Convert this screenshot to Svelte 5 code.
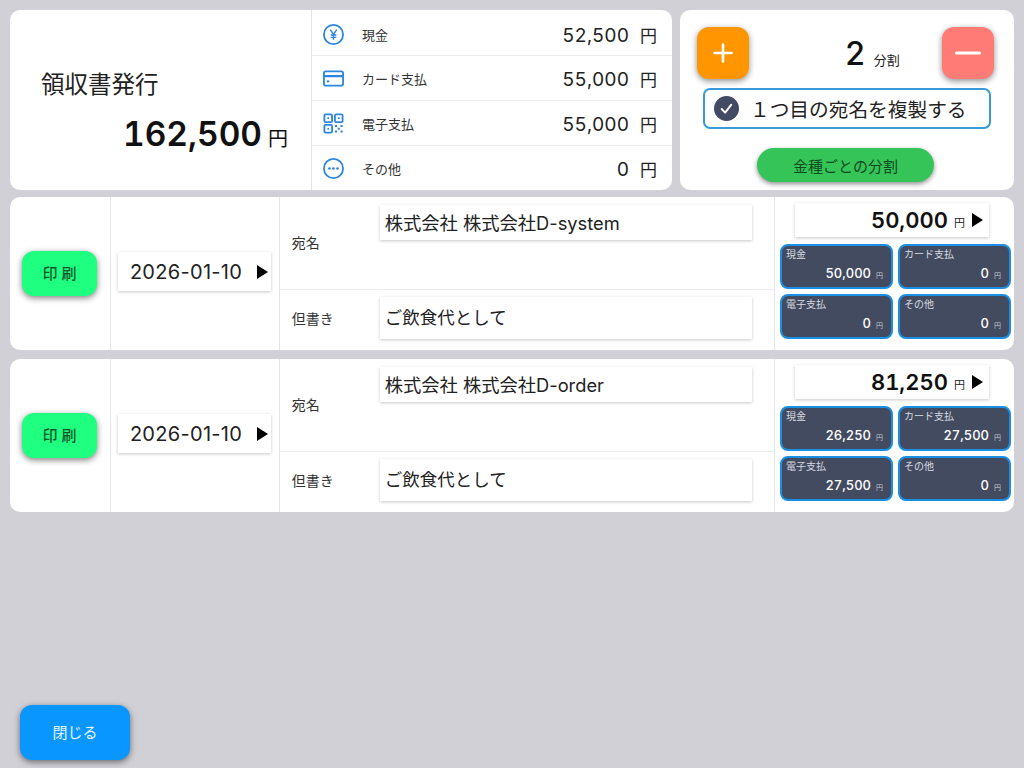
<script>
	const methods = [
		{ key: 'cash', label: '現金', amount: '52,500' },
		{ key: 'card', label: 'カード支払', amount: '55,000' },
		{ key: 'qr', label: '電子支払', amount: '55,000' },
		{ key: 'other', label: 'その他', amount: '0' }
	];

	const receipts = [
		{
			name: '株式会社 株式会社D-system',
			total: '50,000',
			parts: [
				{ label: '現金', amount: '50,000' },
				{ label: 'カード支払', amount: '0' },
				{ label: '電子支払', amount: '0' },
				{ label: 'その他', amount: '0' }
			]
		},
		{
			name: '株式会社 株式会社D-order',
			total: '81,250',
			parts: [
				{ label: '現金', amount: '26,250' },
				{ label: 'カード支払', amount: '27,500' },
				{ label: '電子支払', amount: '27,500' },
				{ label: 'その他', amount: '0' }
			]
		}
	];
</script>

<main class="page">
	<section class="top">
		<div class="card summary">
			<div class="total">
				<h1>領収書発行</h1>
				<p><strong>162,500</strong><span>円</span></p>
			</div>
			<ul class="methods">
				{#each methods as m}
					<li>
						<svg class="icon" viewBox="0 0 24 24" fill="none" stroke="#2f86de" stroke-width="1.9" aria-hidden="true">
							{#if m.key === 'cash'}
								<circle cx="12" cy="12" r="10" />
								<path d="M8.6 7l3.4 5 3.4-5M12 12v5.5M9 12.6h6M9 15h6" stroke-width="1.5" />
							{:else if m.key === 'card'}
								<rect x="2" y="4.5" width="20" height="15" rx="2" />
								<path d="M2 9.5h20" stroke-width="2.4" />
								<rect x="5" y="14" width="2.6" height="2" fill="#2f86de" stroke="none" />
							{:else if m.key === 'qr'}
								<rect x="2.5" y="2.5" width="8" height="8" rx="1.2" />
								<rect x="13.5" y="2.5" width="8" height="8" rx="1.2" />
								<rect x="2.5" y="13.5" width="8" height="8" rx="1.2" />
								<path d="M5.6 5.6h1.8v1.8H5.6zM16.6 5.6h1.8v1.8h-1.8zM5.6 16.6h1.8v1.8H5.6zM13.5 13.5h2.2v2.2h-2.2zM19.3 13.5h2.2v2.2h-2.2zM16.4 16.4h2.2v2.2h-2.2zM13.5 19.3h2.2v2.2h-2.2zM19.3 19.3h2.2v2.2h-2.2z" fill="#2f86de" stroke="none" />
							{:else}
								<circle cx="12" cy="12" r="10" />
								<circle cx="7.8" cy="12" r="1.4" fill="#2f86de" stroke="none" />
								<circle cx="12" cy="12" r="1.4" fill="#2f86de" stroke="none" />
								<circle cx="16.2" cy="12" r="1.4" fill="#2f86de" stroke="none" />
							{/if}
						</svg>
						<span class="method-label">{m.label}</span>
						<span class="method-amount">{m.amount}</span>
						<span class="method-yen">円</span>
					</li>
				{/each}
			</ul>
		</div>

		<div class="card split">
			<div class="stepper">
				<button class="step plus" aria-label="増やす">
					<svg viewBox="0 0 24 24" width="24" height="24" stroke="#fff" stroke-width="2.6" stroke-linecap="round"><path d="M12 3.5v17M3.5 12h17" /></svg>
				</button>
				<div class="count"><strong>2</strong><span>分割</span></div>
				<button class="step minus" aria-label="減らす">
					<svg viewBox="0 0 26 24" width="26" height="24" stroke="#fff" stroke-width="3" stroke-linecap="round"><path d="M1.5 12h23" /></svg>
				</button>
			</div>
			<div class="copy">
				<svg viewBox="0 0 26 26" width="25" height="25" aria-hidden="true">
					<circle cx="13" cy="13" r="13" fill="#424b63" />
					<path d="M8 13.5l3.6 3.8L18 9" fill="none" stroke="#fff" stroke-width="2" stroke-linecap="round" stroke-linejoin="round" />
				</svg>
				<span>１つ目の宛名を複製する</span>
			</div>
			<button class="denom">金種ごとの分割</button>
		</div>
	</section>

	{#each receipts as r}
		<section class="card receipt">
			<div class="col print">
				<button class="print-btn">印 刷</button>
			</div>
			<div class="col date">
				<div class="field date-field">
					<span>2026-01-10</span>
					<i class="arrow"></i>
				</div>
			</div>
			<div class="col details">
				<div class="detail name-row">
					<span class="detail-label">宛名</span>
					<div class="field text-field">{r.name}</div>
				</div>
				<div class="detail note-row">
					<span class="detail-label">但書き</span>
					<div class="field text-field note">ご飲食代として</div>
				</div>
			</div>
			<div class="col amounts">
				<div class="field total-field">
					<strong>{r.total}</strong>
					<span>円</span>
					<i class="arrow"></i>
				</div>
				<div class="tiles">
					{#each r.parts as p}
						<div class="tile">
							<span class="tile-label">{p.label}</span>
							<div class="tile-value"><strong>{p.amount}</strong><span>円</span></div>
						</div>
					{/each}
				</div>
			</div>
		</section>
	{/each}

	<button class="close">閉じる</button>
</main>

<style>
	:global(body) {
		background: #d1d0d7;
	}

	.page {
		position: relative;
		box-sizing: border-box;
		height: 768px;
		padding: 10px;
		overflow: hidden;
		color: #222;
		font-family: Inter, 'Noto Sans CJK JP', sans-serif;
	}

	button {
		border: 0;
		padding: 0;
		font-family: inherit;
		cursor: pointer;
	}

	.card {
		background: #fff;
		border-radius: 10px;
	}

	.top {
		display: flex;
		gap: 8px;
		height: 180px;
		margin-bottom: 7px;
	}

	.summary {
		display: flex;
		width: 662px;
	}

	.total {
		box-sizing: border-box;
		width: 302px;
		padding: 60px 23px 0 31px;
		border-right: 1px solid #e6e6e8;
	}

	h1 {
		margin: 0;
		font-size: 23.5px;
		font-weight: 400;
		line-height: 30px;
	}

	.total p {
		display: flex;
		justify-content: flex-end;
		align-items: baseline;
		gap: 6px;
		margin: 12px 0 0;
		color: #111;
	}

	.total strong {
		font-size: 33.5px;
		font-weight: 600;
		line-height: 44px;
		font-variant-numeric: tabular-nums;
	}

	.total p span {
		font-size: 20px;
	}

	.methods {
		flex: 1;
		margin: 0;
		padding: 0;
		list-style: none;
	}

	.methods li {
		display: flex;
		align-items: center;
		box-sizing: border-box;
		height: 45px;
		padding: 0 15px 0 10px;
		border-bottom: 1px solid #ececee;
	}

	.methods li:first-child {
		height: 46px;
		padding-top: 3px;
	}

	.methods li:last-child {
		height: 44px;
		border-bottom: 0;
	}

	.icon {
		width: 23px;
		height: 23px;
		margin-right: 17px;
		flex: none;
	}

	.method-label {
		font-size: 13px;
		color: #333;
	}

	.method-amount {
		margin: 2px 0 0 auto;
		font-size: 19px;
		font-variant-numeric: tabular-nums;
	}

	.method-yen {
		margin: 1px 0 0 11px;
		font-size: 17px;
	}

	.split {
		display: flex;
		flex-direction: column;
		align-items: center;
		box-sizing: border-box;
		width: 334px;
		padding-top: 17px;
	}

	.stepper {
		display: flex;
		justify-content: space-between;
		align-items: center;
		box-sizing: border-box;
		width: 100%;
		padding: 0 20px 0 17px;
	}

	.step {
		display: grid;
		place-items: center;
		width: 52px;
		height: 52px;
		border-radius: 12px;
		box-shadow: 0 2px 6px rgba(0, 0, 0, 0.45);
	}

	.plus {
		background: #ff9500;
	}

	.minus {
		background: #ff7b76;
	}

	.count {
		display: flex;
		align-items: baseline;
		gap: 9px;
		margin-left: 54px;
	}

	.count strong {
		font-size: 32px;
		font-weight: 500;
		color: #111;
	}

	.count span {
		font-size: 13px;
	}

	.copy {
		display: flex;
		align-items: center;
		gap: 11px;
		box-sizing: border-box;
		width: 288px;
		height: 41px;
		margin: 9px 0 1px;
		padding-left: 9px;
		border: 2px solid #3a9ad9;
		border-radius: 7px;
		font-size: 19.7px;
	}

	.denom {
		width: 177px;
		height: 34px;
		margin: 18px 3px 0 0;
		border-radius: 17px;
		background: #34c457;
		color: #0f4a1f;
		font-size: 15px;
		box-shadow: 0 2px 5px rgba(0, 0, 0, 0.45);
	}

	.receipt {
		display: flex;
		height: 153px;
		margin-bottom: 9px;
	}

	.col {
		box-sizing: border-box;
		border-right: 1px solid #e6e6e8;
	}

	.print {
		display: flex;
		align-items: center;
		width: 101px;
		padding-left: 12px;
	}

	.print-btn {
		width: 75px;
		height: 45px;
		padding-bottom: 3px;
		border-radius: 12px;
		background: #1fff80;
		color: #0b5a2c;
		font-size: 15px;
		font-weight: 500;
		box-shadow: 0 2px 6px rgba(0, 0, 0, 0.5);
	}

	.date {
		display: flex;
		align-items: center;
		width: 169px;
		padding: 0 0 4px 7px;
	}

	.field {
		box-sizing: border-box;
		background: #fff;
		box-shadow: 0 1px 3px rgba(0, 0, 0, 0.22);
	}

	.date-field {
		display: flex;
		align-items: center;
		justify-content: space-between;
		width: 153px;
		height: 39px;
		padding: 0 3px 0 12px;
		font-size: 20px;
		letter-spacing: 0.3px;
	}

	.arrow {
		display: block;
		width: 0;
		height: 0;
		border-style: solid;
		border-width: 7px 0 7px 11px;
		border-color: transparent transparent transparent #000;
	}

	.details {
		width: 496px;
	}

	.detail {
		display: flex;
		padding-right: 22px;
	}

	.name-row {
		height: 92px;
		border-bottom: 1px solid #ececee;
	}

	.note-row {
		height: 60px;
		padding-top: 7px;
	}

	.detail-label {
		width: 100px;
		padding-left: 12px;
		box-sizing: border-box;
		font-size: 14px;
		color: #333;
	}

	.name-row .detail-label {
		align-self: center;
		margin-top: -2px;
	}

	.note-row .detail-label {
		margin-top: 11px;
	}

	.text-field {
		flex: 1;
		height: 35px;
		margin-top: 8px;
		padding: 0 5px;
		font-size: 18.3px;
		line-height: 37px;
	}

	.text-field.note {
		height: 42px;
		margin-top: 0;
		padding-left: 5px;
		font-size: 17.5px;
		line-height: 41px;
	}

	.amounts {
		flex: 1;
		border-right: 0;
		padding: 6px 3px 0 5px;
	}

	.total-field {
		display: flex;
		align-items: center;
		justify-content: flex-end;
		width: 194px;
		height: 34px;
		margin-left: 15px;
		padding-right: 6px;
	}

	.total-field strong {
		font-size: 22px;
		font-weight: 600;
		color: #111;
		font-variant-numeric: tabular-nums;
	}

	.total-field span {
		margin: 3px 7px 0 6px;
		font-size: 11px;
	}

	.tiles {
		display: grid;
		grid-template-columns: 113px 113px;
		grid-auto-rows: 45px;
		gap: 5px;
		margin-top: 7px;
	}

	.tile {
		box-sizing: border-box;
		display: flex;
		flex-direction: column;
		padding: 1px 8px 0 4px;
		border: 2px solid #1a8fe3;
		border-radius: 8px;
		background: #434b60;
		color: #fff;
	}

	.tile-label {
		font-size: 10px;
		line-height: 15px;
		color: #d8dbe2;
	}

	.tile-value {
		display: flex;
		justify-content: flex-end;
		align-items: baseline;
		gap: 5px;
		margin-top: 1px;
	}

	.tile-value strong {
		font-size: 13px;
		font-weight: 500;
		line-height: 20px;
		font-variant-numeric: tabular-nums;
	}

	.tile-value span {
		font-size: 7px;
		color: #c5c9d3;
	}

	.close {
		position: absolute;
		left: 20px;
		top: 705px;
		width: 110px;
		height: 55px;
		padding-bottom: 3px;
		border-radius: 12px;
		background: #0a96ff;
		color: #e8f5ff;
		font-size: 15px;
		box-shadow: 0 2px 6px rgba(0, 0, 0, 0.5);
	}
</style>
